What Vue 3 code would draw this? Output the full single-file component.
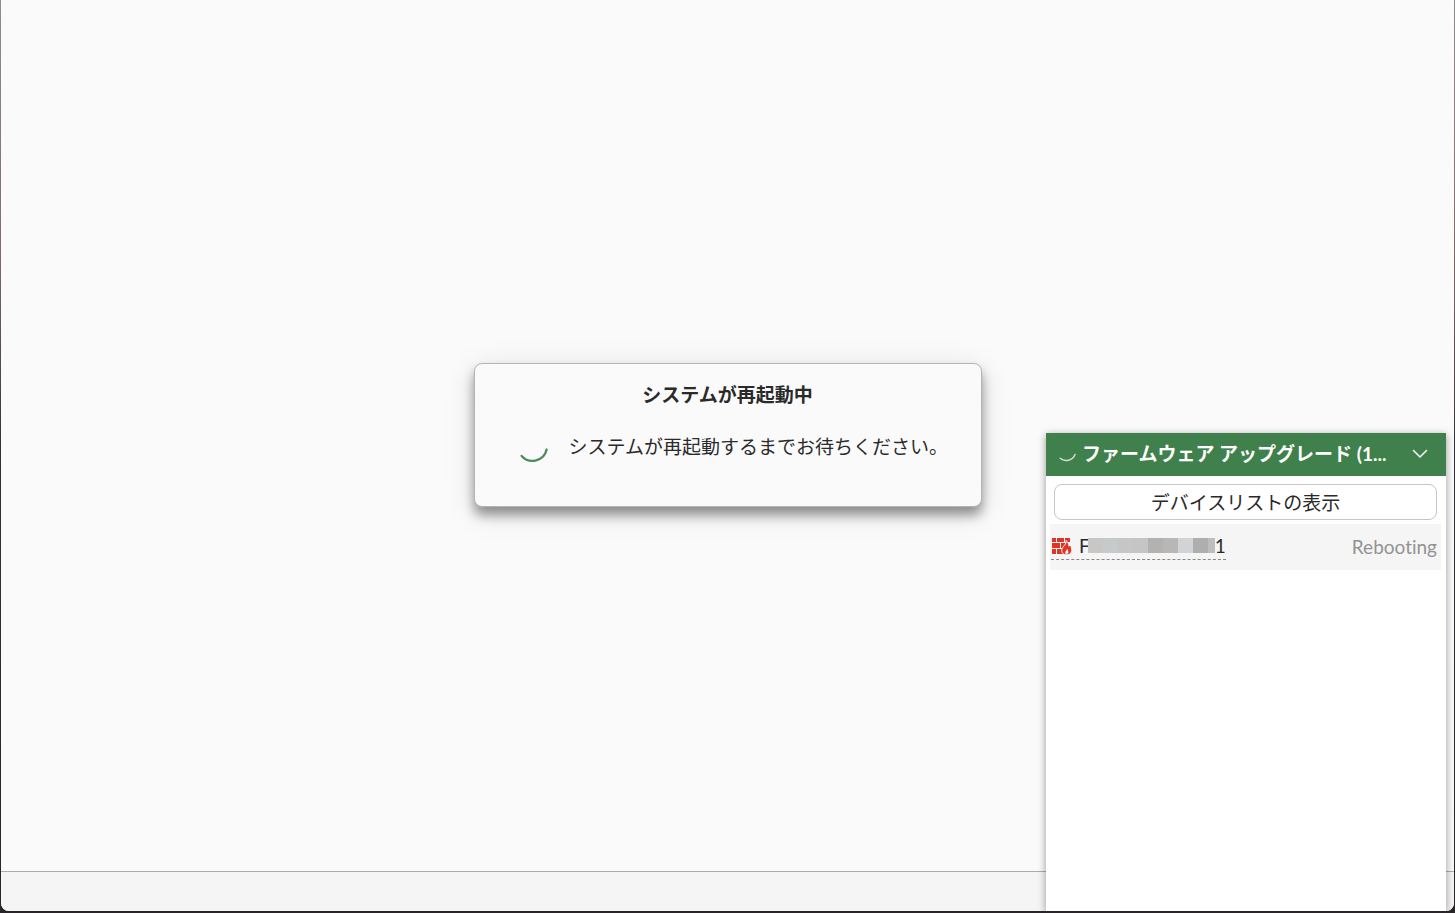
<script setup>
import { ref } from 'vue';

const panelOpen = ref(true);

// Shades of the blocks that mask the serial number
const maskBlocks = ['#c9c7c6', '#c7cacb', '#c6c6c6', '#c3c5c7', '#b4b2b1', '#b9b7b6', '#d1d4d7', '#aeaeaf', '#bdbdbd'];
</script>

<template>
  <div class="window">
    <div class="screen">
      <main class="content">
        <section class="dialog" role="alertdialog" aria-labelledby="dialog-title">
          <h1 id="dialog-title">システムが再起動中</h1>
          <div class="dialog-body">
            <svg class="spinner" viewBox="0 0 32 32" aria-hidden="true">
              <path d="M2.8 22.3A15.5 15.5 0 0 0 29.5 15.5" />
            </svg>
            <p>システムが再起動するまでお待ちください。</p>
          </div>
        </section>
      </main>
      <footer class="footer"></footer>

      <aside class="panel">
        <header class="panel-header">
          <svg class="panel-spinner" viewBox="0 0 18 18" aria-hidden="true">
            <path d="M2.2 13.3A9.4 9.4 0 0 0 17 9.5" />
          </svg>
          <h2>ファームウェア アップグレード (1...</h2>
          <button class="toggle" type="button" :aria-expanded="panelOpen" @click="panelOpen = !panelOpen">
            <svg viewBox="0 0 16 10" aria-hidden="true">
              <path d="M1.5 1.5L8 8L14.5 1.5" />
            </svg>
          </button>
        </header>
        <div v-show="panelOpen" class="panel-body">
          <button class="list-button" type="button">デバイスリストの表示</button>
          <div class="device">
            <a class="device-name" href="#">
              <svg class="firewall" viewBox="0 0 21 18" aria-hidden="true">
                <path class="brick" d="M1 1h4v4H1zM6 1h7v4H6zM14 1h5v4h-5zM1 6h8v5H1zM10 6h5v5h-5zM1 12h4v5H1zM6 12h6v5H6z" />
                <path class="flame" d="M15 3.5C16 7.5 11.6 9 10.8 12.6C10.3 15.8 12.4 17.8 15.6 17.8C19.2 17.8 21 15.4 20.7 12.2C20.5 10.2 19.8 8.6 19 7.4L18 9.2C17.8 6.8 17 4.8 15 3.5z" />
                <path class="core" d="M15.9 11.8C16 13.6 14.2 14.2 14.2 15.7C14.3 16.6 14.9 17 15.7 17C16.8 17 17.5 16.2 17.4 15.1C17.3 13.7 16.6 12.8 15.9 11.8z" />
              </svg>
              <span>F</span>
              <span class="mask">
                <i v-for="(shade, i) in maskBlocks" :key="i" :style="{ background: shade }"></i>
              </span>
              <span>1</span>
            </a>
            <span class="status">Rebooting</span>
          </div>
        </div>
      </aside>
    </div>
  </div>
</template>

<style>
body {
  margin: 0;
}
</style>

<style scoped>
.window {
  box-sizing: border-box;
  height: 100vh;
  padding: 0 1px 2px;
  background: linear-gradient(#908c8c 0, #806c6a 250px, #343038 450px, #2a2529 100%);
  color: #2a2a2a;
  font-family: Lato, "Noto Sans CJK JP", sans-serif;
  font-size: 19px;
  font-variant-ligatures: none;
}

.screen {
  position: relative;
  display: flex;
  flex-direction: column;
  height: 100%;
  overflow: hidden;
  border-radius: 0 0 8px 8px;
  background: #fafafa;
}

.content {
  display: flex;
  flex: 1;
  align-items: center;
  justify-content: center;
  padding-bottom: 1px;
}

.footer {
  height: 39px;
  border-top: 1px solid #acacac;
  background: #f5f5f5;
}

.dialog {
  box-sizing: border-box;
  width: 508px;
  height: 144px;
  padding: 17px 44px;
  border: 1px solid #b4b4b4;
  border-radius: 8px;
  background: #fafafa;
  box-shadow: 0 8px 12px rgba(0, 0, 0, 0.4), 0 6px 32px rgba(0, 0, 0, 0.1);
}

h1,
h2,
p {
  margin: 0;
  font-size: 19px;
  line-height: 28px;
}

h1 {
  text-align: center;
}

.dialog-body {
  display: flex;
  align-items: flex-start;
  gap: 20px;
  margin-top: 24px;
  white-space: nowrap;
}

.spinner {
  flex: none;
  width: 30px;
  height: 30px;
  margin-top: 2px;
}

.spinner path,
.panel-spinner path,
.toggle path {
  fill: none;
  stroke: #4c8c5c;
  stroke-width: 2.5;
  stroke-linecap: round;
}

.panel {
  position: absolute;
  right: 8px;
  bottom: 0;
  display: flex;
  flex-direction: column;
  width: 400px;
  background: #fff;
  box-shadow: 0 2px 8px rgba(0, 0, 0, 0.4);
}

.panel-header {
  display: flex;
  align-items: center;
  box-sizing: border-box;
  height: 43px;
  padding: 0 16px 1px 12px;
  background: #40804c;
  color: #fff;
}

.panel-header h2 {
  flex: 1;
  margin-left: 6px;
  font-weight: 700;
  white-space: nowrap;
}

.panel-spinner {
  width: 18px;
  height: 18px;
}

.panel-spinner path {
  stroke: #d0e2d3;
  stroke-width: 1.5;
}

.toggle {
  display: flex;
  padding: 2px;
  border: 0;
  background: none;
  cursor: pointer;
}

.toggle svg {
  width: 16px;
  height: 10px;
}

.toggle path {
  stroke: #fff;
  stroke-width: 1.5;
}

.panel-body {
  height: 435px;
}

.list-button {
  display: block;
  width: calc(100% - 17px);
  height: 36px;
  margin: 8px 9px 4px 8px;
  padding: 0 0 2px;
  border: 1px solid #c6c6c6;
  border-radius: 8px;
  background: #fff;
  color: inherit;
  font: inherit;
  cursor: pointer;
}

.device {
  display: flex;
  align-items: center;
  justify-content: space-between;
  box-sizing: border-box;
  height: 46px;
  margin: 0 5px 0 4px;
  padding: 0 4px 2px 1px;
  background: #f5f5f5;
}

.device-name {
  display: flex;
  align-items: center;
  height: 26px;
  border-bottom: 1px dashed #888;
  color: inherit;
  text-decoration: none;
}

.firewall {
  width: 21px;
  height: 18px;
  margin-right: 7px;
}

.brick {
  fill: #df3526;
}

.flame {
  fill: #df3526;
  stroke: #f5f5f5;
  stroke-width: 1;
}

.core {
  fill: #f5f5f5;
}

.mask {
  display: flex;
  margin-left: -2px;
}

.mask i {
  width: 15px;
  height: 15px;
}

.mask i:last-child {
  width: 7px;
}

.status {
  color: #939393;
}
</style>
